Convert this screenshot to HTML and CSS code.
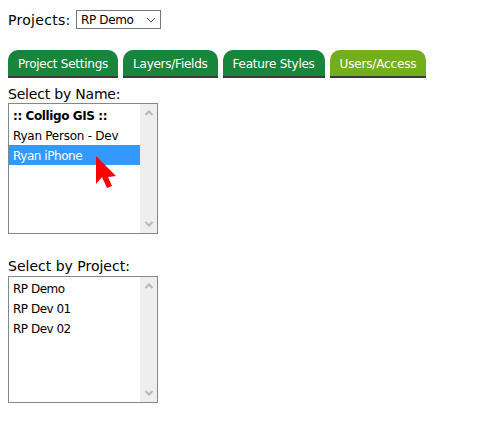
FILE: index.html
```html
<!DOCTYPE html>
<html lang="en">
<head>
    <meta charset="UTF-8">
    <title>Users/Access</title>
    <link rel="stylesheet" href="styles.css">
</head>
<body>
    <div class="project-row">
        <span class="project-label">Projects:</span>
        <div class="project-select">
            <span>RP Demo</span>
            <svg width="10" height="6" viewBox="0 0 10 6"><path d="M1 1l4 4 4-4" fill="none" stroke="#555" stroke-width="1"/></svg>
        </div>
    </div>

    <div class="tabs">
        <div class="tab">Project Settings</div>
        <div class="tab">Layers/Fields</div>
        <div class="tab">Feature Styles</div>
        <div class="tab active">Users/Access</div>
    </div>

    <div class="field-label first">Select by Name:</div>
    <div class="listbox name-list">
        <div class="options">
            <div class="option bold">:: Colligo GIS ::</div>
            <div class="option">Ryan Person - Dev</div>
            <div class="option selected">Ryan iPhone</div>
        </div>
        <div class="scrollbar">
            <svg width="10" height="6" viewBox="0 0 10 6"><path d="M1.5 5l3.5-3.5 3.5 3.5" fill="none" stroke="#b8b8b8" stroke-width="2"/></svg>
            <svg width="10" height="6" viewBox="0 0 10 6"><path d="M1.5 1l3.5 3.5 3.5-3.5" fill="none" stroke="#b8b8b8" stroke-width="2"/></svg>
        </div>
        <svg class="cursor" width="21" height="33" viewBox="0 0 21 33"><path d="M0 0L20 20 12 21 16 30 11 32 6 21 0 28z" fill="#f00"/></svg>
    </div>

    <div class="field-label second">Select by Project:</div>
    <div class="listbox project-list">
        <div class="options">
            <div class="option">RP Demo</div>
            <div class="option">RP Dev 01</div>
            <div class="option">RP Dev 02</div>
        </div>
        <div class="scrollbar">
            <svg width="10" height="6" viewBox="0 0 10 6"><path d="M1.5 5l3.5-3.5 3.5 3.5" fill="none" stroke="#b8b8b8" stroke-width="2"/></svg>
            <svg width="10" height="6" viewBox="0 0 10 6"><path d="M1.5 1l3.5 3.5 3.5-3.5" fill="none" stroke="#b8b8b8" stroke-width="2"/></svg>
        </div>
    </div>
</body>
</html>
```

FILE: styles.css
```css
* {
    box-sizing: border-box;
}

body {
    margin: 0;
    padding: 10px 8px 0;
    background: #fff;
    color: #000;
    font-family: "DejaVu Sans", sans-serif;
    font-size: 14px;
}

.project-row {
    display: flex;
    align-items: center;
    height: 19px;
}

.project-label {
    width: 68px;
    letter-spacing: 0.3px;
}

.project-select {
    width: 85px;
    height: 19px;
    display: flex;
    align-items: center;
    justify-content: space-between;
    padding: 0 4px;
    border: 1px solid #767676;
    font-size: 12px;
    letter-spacing: -0.35px;
}

.tabs {
    display: flex;
    gap: 5px;
    margin-top: 21px;
}

.tab {
    height: 28px;
    padding: 1px 10px 0;
    display: flex;
    align-items: center;
    background: #17853b;
    border-bottom: 2px solid #3a3a3a;
    border-radius: 10px 10px 0 0;
    color: #fff;
    font-size: 12px;
    letter-spacing: -0.25px;
}

.tab.active {
    background: #73ae1d;
    letter-spacing: -0.17px;
}

.field-label {
    height: 17px;
    margin-top: 8px;
    line-height: 17px;
}

.field-label.first {
    letter-spacing: -0.2px;
}

.field-label.second {
    margin-top: 25px;
    line-height: 15px;
}

.listbox {
    position: relative;
    display: flex;
    width: 150px;
    border: 1px solid #828790;
}

.name-list {
    height: 131px;
}

.project-list {
    height: 127px;
}

.options {
    flex: 1;
    padding-top: 1px;
}

.option {
    height: 20px;
    padding-left: 4px;
    line-height: 22px;
    font-size: 12px;
    letter-spacing: -0.25px;
}

.option.bold {
    font-weight: bold;
    letter-spacing: -0.4px;
}

.option.selected {
    background: #3399ff;
    color: #fff;
    letter-spacing: -0.45px;
}

.project-list .option {
    letter-spacing: -0.5px;
}

.scrollbar {
    width: 17px;
    display: flex;
    flex-direction: column;
    justify-content: space-between;
    align-items: center;
    padding: 6px 0;
    background: #eee;
}

.cursor {
    position: absolute;
    left: 87px;
    top: 52px;
}
```
